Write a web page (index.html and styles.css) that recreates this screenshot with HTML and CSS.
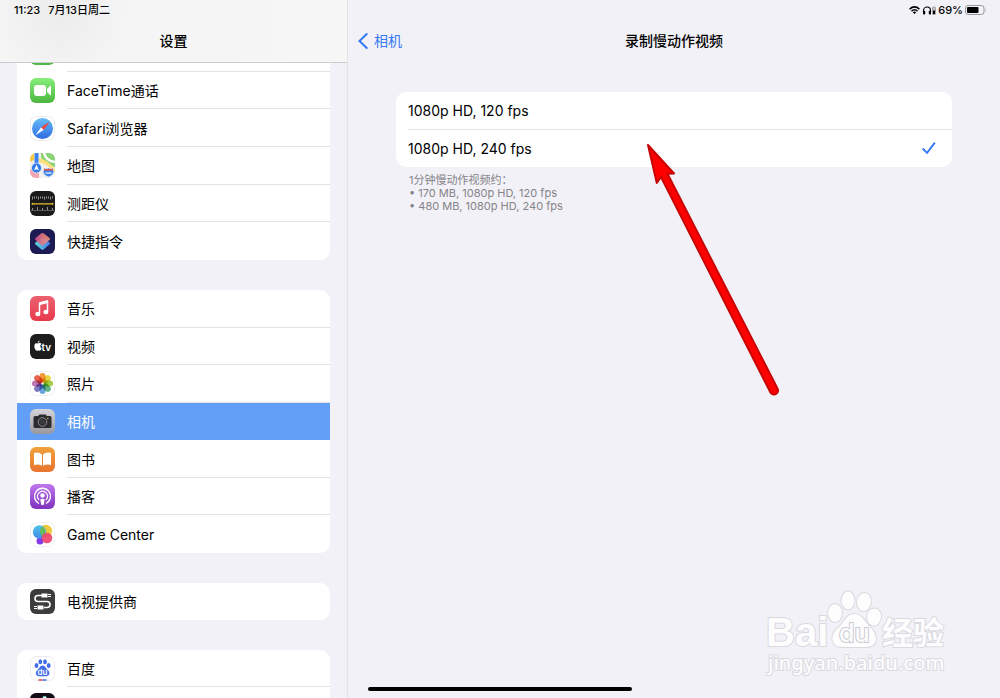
FILE: index.html
```html
<!DOCTYPE html>
<html lang="zh-CN">
<head>
    <meta charset="UTF-8">
    <meta name="viewport" content="width=device-width, initial-scale=1.0">
    <title>设置</title>
    <link rel="stylesheet" href="styles.css">
</head>
<body>
    <!-- 左侧设置列表 -->
    <aside class="sidebar">
        <header class="sidebar-header">
            <div class="status">
                <span>11:23</span>
                <span>7月13日周二</span>
            </div>
            <h1 class="title">设置</h1>
        </header>

        <nav class="list">
            <div class="group group-top">
                <a class="row" href="#messages" aria-label="信息">
                    <svg class="icon" viewBox="0 0 25 25"><rect width="25" height="25" rx="6" fill="#4fb943"/></svg>
                    <span class="label"></span>
                </a>
                <a class="row" href="#facetime">
                    <svg class="icon" viewBox="0 0 25 25">
                        <defs><linearGradient id="green" x2="0" y2="1"><stop stop-color="#86ee7c"/><stop offset="1" stop-color="#4cb73f"/></linearGradient></defs>
                        <rect width="25" height="25" rx="6" fill="url(#green)"/>
                        <rect x="4" y="7" width="12" height="11" rx="3" fill="#fff"/>
                        <path d="M17 11l3-3q1-.6 1 .6v8q0 1.200-1 .5l-3-3z" fill="#fff"/>
                    </svg>
                    <span class="label">FaceTime通话</span>
                </a>
                <a class="row" href="#safari">
                    <svg class="icon" viewBox="0 0 25 25">
                        <defs><linearGradient id="blue" x2="0" y2="1"><stop stop-color="#65bdf8"/><stop offset="1" stop-color="#2e6be2"/></linearGradient></defs>
                        <rect x=".5" y=".5" width="24" height="24" rx="6" fill="#fff" stroke="#ececf0"/>
                        <circle cx="12.500" cy="12.500" r="10.500" fill="url(#blue)"/>
                        <path d="M19.800 5.700l-6.200 8.200-2.400-2.600z" fill="#f0453c"/>
                        <path d="M5.300 19.200l5.900-7.900 2.400 2.600z" fill="#fff"/>
                    </svg>
                    <span class="label">Safari浏览器</span>
                </a>
                <a class="row" href="#maps">
                    <svg class="icon" viewBox="0 0 25 25">
                        <defs><clipPath id="tile"><rect width="25" height="25" rx="6"/></clipPath></defs>
                        <g clip-path="url(#tile)">
                            <rect width="25" height="25" fill="#f3f1ec"/>
                            <path d="M11 0h14v14Q17 12 11 5z" fill="#8bd374"/>
                            <path d="M14 0q2 8 11 9" fill="none" stroke="#fff" stroke-width="2.500"/>
                            <path d="M0 0h4v7L0 9z" fill="#f7c944"/>
                            <path d="M0 16l9 4v5H0z" fill="#f4a5b4"/>
                            <path d="M9 5q9 2 16 11v4Q17 11 9 9z" fill="#fbdf7b"/>
                            <path d="M6.500 0v13" stroke="#3b82ef" stroke-width="4"/>
                            <circle cx="6.500" cy="15" r="5" fill="#2f7bea" stroke="#fff" stroke-width=".6"/>
                            <path d="M6.500 11.500l2.500 6-2.500-1.200L4 17.500z" fill="#fff"/>
                            <path d="M14 15q2.500 1 4.500 0 2 1 4.500 0l1 4q-1 4-5.500 5-4.500-1-5.500-5z" fill="#3b82e8" stroke="#fff" stroke-width=".6"/>
                            <path d="M14 15.500q2.500 1 4.500 0 2 1 4.500 0v2h-9z" fill="#e55349"/>
                            <path d="M15.500 20h6" stroke="#cde2ff" stroke-width="1.500"/>
                        </g>
                    </svg>
                    <span class="label">地图</span>
                </a>
                <a class="row" href="#measure">
                    <svg class="icon" viewBox="0 0 25 25">
                        <rect width="25" height="25" rx="6" fill="#1b1b1c"/>
                        <path d="M2.500 5.500v3M4.500 5.500v2M6.500 5.500v2M8.500 5.500v3M10.500 5.500v2M12.500 5.500v2M14.500 5.500v3M16.500 5.500v2M18.500 5.500v2M20.500 5.500v3M22.500 5.500v2M2.500 19v-2M7.500 19v-3M12.500 19v-2M17.500 19v-3M22.500 19v-2" stroke="#b5b5b5" stroke-width=".8"/>
                        <path d="M1 19.500h23" stroke="#777" stroke-width=".7"/>
                        <path d="M2 12.800h21" stroke="#e5bd2c" stroke-width="1.200"/>
                        <circle cx="2.500" cy="12.800" r="1" fill="#e5bd2c"/><circle cx="22.500" cy="12.800" r="1" fill="#e5bd2c"/>
                    </svg>
                    <span class="label">测距仪</span>
                </a>
                <a class="row" href="#shortcuts">
                    <svg class="icon" viewBox="0 0 25 25">
                        <defs>
                            <linearGradient id="pink"><stop stop-color="#d74f91"/><stop offset="1" stop-color="#ef9d76"/></linearGradient>
                            <linearGradient id="cyan"><stop stop-color="#5ed8d0"/><stop offset="1" stop-color="#4a77ee"/></linearGradient>
                        </defs>
                        <rect width="25" height="25" rx="6" fill="#1c1b54"/>
                        <path d="M12.500 8.500l7 5q1 1 0 2l-6 5q-1 .8-2 0l-6-5q-1-1 0-2z" fill="url(#cyan)"/>
                        <path d="M11.500 4.300q1-.8 2 0l6 4.700q1 1 0 2l-6 5q-1 .8-2 0l-6-5q-1-1 0-2z" fill="url(#pink)" opacity=".9"/>
                    </svg>
                    <span class="label">快捷指令</span>
                </a>
            </div>

            <div class="group group-media">
                <a class="row" href="#music">
                    <svg class="icon" viewBox="0 0 25 25">
                        <defs><linearGradient id="red" x2="0" y2="1"><stop stop-color="#ed6070"/><stop offset="1" stop-color="#e63b4c"/></linearGradient></defs>
                        <rect width="25" height="25" rx="6" fill="url(#red)"/>
                        <path d="M9.500 17.500V7.800l8-2v9.700" fill="none" stroke="#fff" stroke-width="1.500"/>
                        <path d="M9 6.200l9-2.200v3L9 9.200z" fill="#fff"/>
                        <ellipse cx="7.800" cy="18" rx="2.500" ry="2.200" fill="#fff"/><ellipse cx="15.900" cy="16" rx="2.500" ry="2.200" fill="#fff"/>
                    </svg>
                    <span class="label">音乐</span>
                </a>
                <a class="row" href="#tv">
                    <svg class="icon" viewBox="0 0 25 25">
                        <rect width="25" height="25" rx="6" fill="#1d1d1e"/>
                        <path d="M7.600 9.600q1.200-.8 2.600-.5.800.2 1.200.8-1.300.8-1.100 2.300.2 1.400 1.400 2-.9 2.500-2.200 2.500-.9-.4-1.800 0-1.300.4-2.500-1.300-1.500-2.500-.7-4.700 1-2 3.100-1.100zM7.700 8.900q-.1-1.900 1.800-2.500.2 2.100-1.800 2.500z" fill="#fff"/>
                        <text x="11.500" y="16.500" class="tv-text">tv</text>
                    </svg>
                    <span class="label">视频</span>
                </a>
                <a class="row" href="#photos">
                    <svg class="icon petals" viewBox="0 0 25 25">
                        <rect x=".5" y=".5" width="24" height="24" rx="6" fill="#fff" stroke="#f0f0f2"/>
                        <rect class="petal" x="9.500" y="2" width="6" height="9.500" rx="3" fill="#f29a38"/>
                        <rect class="petal" x="9.500" y="2" width="6" height="9.500" rx="3" fill="#ead43d" transform="rotate(45 12.500 12.500)"/>
                        <rect class="petal" x="9.500" y="2" width="6" height="9.500" rx="3" fill="#a4cc45" transform="rotate(90 12.500 12.500)"/>
                        <rect class="petal" x="9.500" y="2" width="6" height="9.500" rx="3" fill="#62b588" transform="rotate(135 12.500 12.500)"/>
                        <rect class="petal" x="9.500" y="2" width="6" height="9.500" rx="3" fill="#67a5dc" transform="rotate(180 12.500 12.500)"/>
                        <rect class="petal" x="9.500" y="2" width="6" height="9.500" rx="3" fill="#8178c2" transform="rotate(225 12.500 12.500)"/>
                        <rect class="petal" x="9.500" y="2" width="6" height="9.500" rx="3" fill="#be75b0" transform="rotate(270 12.500 12.500)"/>
                        <rect class="petal" x="9.500" y="2" width="6" height="9.500" rx="3" fill="#e8634f" transform="rotate(315 12.500 12.500)"/>
                    </svg>
                    <span class="label">照片</span>
                </a>
                <a class="row selected" href="#camera" aria-current="page">
                    <svg class="icon" viewBox="0 0 25 25">
                        <defs><linearGradient id="gray" x2="0" y2="1"><stop stop-color="#d6d6da"/><stop offset="1" stop-color="#98989d"/></linearGradient></defs>
                        <rect width="25" height="25" rx="6" fill="url(#gray)"/>
                        <path d="M5 7h3l1.500-1.500h6L17 7h3q1.500 0 1.500 1.500v9q0 1.500-1.500 1.500H5q-1.500 0-1.500-1.500v-9Q3.500 7 5 7z" fill="#2c2c2e"/>
                        <circle cx="12.500" cy="13" r="4.300" fill="none" stroke="#8f8f92" stroke-width="1"/>
                        <circle cx="12.500" cy="13" r="2.800" fill="#3b3b3d"/>
                        <circle cx="17.800" cy="9.500" r=".8" fill="#e8b52c"/>
                    </svg>
                    <span class="label">相机</span>
                </a>
                <a class="row" href="#books">
                    <svg class="icon" viewBox="0 0 25 25">
                        <defs><linearGradient id="orange" x2="0" y2="1"><stop stop-color="#f1a13c"/><stop offset="1" stop-color="#e8742f"/></linearGradient></defs>
                        <rect width="25" height="25" rx="6" fill="url(#orange)"/>
                        <path d="M12 7.500q-3.500-3-8-1.500v12q4.500-1.500 8 .8zM13 7.500q3.500-3 8-1.500v12q-4.500-1.500-8 .8z" fill="#fff"/>
                    </svg>
                    <span class="label">图书</span>
                </a>
                <a class="row" href="#podcasts">
                    <svg class="icon" viewBox="0 0 25 25">
                        <defs><linearGradient id="purple" x2="0" y2="1"><stop stop-color="#c077ee"/><stop offset="1" stop-color="#7e32bd"/></linearGradient></defs>
                        <rect width="25" height="25" rx="6" fill="url(#purple)"/>
                        <g fill="none" stroke="#fff" stroke-width="1.300" stroke-linecap="round">
                            <path d="M8.500 19.200a8 8 0 1 1 8 0"/>
                            <path d="M8.700 15.500a5 5 0 1 1 7.600 0"/>
                        </g>
                        <circle cx="12.500" cy="11.500" r="2.200" fill="#fff"/>
                        <path d="M10.300 15.500q2.200-1.500 4.400 0l-.8 5q-1.400 1.200-2.800 0z" fill="#fff"/>
                    </svg>
                    <span class="label">播客</span>
                </a>
                <a class="row" href="#gamecenter">
                    <svg class="icon" viewBox="0 0 25 25">
                        <defs><linearGradient id="sky" x2="0" y2="1"><stop stop-color="#4fc3e9"/><stop offset="1" stop-color="#438be9"/></linearGradient></defs>
                        <rect x=".5" y=".5" width="24" height="24" rx="6" fill="#fff" stroke="#f0f0f2"/>
                        <circle cx="10" cy="19" r="3.500" fill="#833be8"/>
                        <circle cx="15.800" cy="9" r="6.300" fill="#f1c83d"/>
                        <circle cx="9.500" cy="10" r="6.700" fill="url(#sky)"/>
                        <path d="M12.700 4.200a6.300 6.300 0 0 0 .5 10.500 6.700 6.700 0 0 0-.5-10.500z" fill="#64bd59"/>
                        <circle cx="17" cy="16" r="5.300" fill="#ef4770" opacity=".93"/>
                    </svg>
                    <span class="label">Game Center</span>
                </a>
            </div>

            <div class="group">
                <a class="row" href="#tvprovider">
                    <svg class="icon" viewBox="0 0 25 25">
                        <rect width="25" height="25" rx="6" fill="#3c3c3d"/>
                        <path d="M12 6.500H8q-3 0-3 3t3 3h9q3 0 3 3t-3 3h-3" fill="none" stroke="#fff" stroke-width="1.600"/>
                        <path d="M11.500 4.500h6v4h-6zM7.500 16.500h6v4h-6z" fill="#fff"/>
                        <path d="M18 5.500h3M18 7.500h3M4 17.500h3M4 19.500h3" stroke="#fff" stroke-width="1"/>
                    </svg>
                    <span class="label">电视提供商</span>
                </a>
            </div>

            <div class="group">
                <a class="row" href="#baidu">
                    <svg class="icon" viewBox="0 0 25 25">
                        <rect x=".5" y=".5" width="24" height="24" rx="6" fill="#fff" stroke="#ececf0"/>
                        <g fill="#416cea">
                            <ellipse cx="6.500" cy="9.500" rx="1.900" ry="2.500"/><ellipse cx="10.300" cy="5.700" rx="1.900" ry="2.500"/>
                            <ellipse cx="15" cy="5.700" rx="1.900" ry="2.500"/><ellipse cx="18.700" cy="9.500" rx="1.900" ry="2.500"/>
                            <path d="M12.600 9.500c2.500 0 3.500 3 5.200 4.500 3 2.800 1.500 6.200-1.500 6.200H9c-3 0-4.500-3.400-1.500-6.200 1.600-1.500 2.600-4.500 5.100-4.500z"/>
                        </g>
                        <text x="12.500" y="18.700" class="du-text">du</text>
                        <path d="M8.500 24h4" stroke="#e5473d" stroke-width="1.500"/><path d="M12.500 24h4" stroke="#416cea" stroke-width="1.500"/>
                    </svg>
                    <span class="label">百度</span>
                </a>
                <a class="row" href="#douyin" aria-label="抖音">
                    <svg class="icon" viewBox="0 0 25 25">
                        <rect width="25" height="25" rx="6" fill="#140d18"/>
                        <path d="M13 3.500h3q.5 4 4 4.500v3q-2.500 0-4-1.300V16a5 5 0 1 1-4-4.900v3a2 2 0 1 0 1 1.900z" fill="#fff" stroke="#45d5d5" stroke-width=".6"/>
                    </svg>
                    <span class="label"></span>
                </a>
            </div>
        </nav>
    </aside>

    <!-- 右侧详情 -->
    <main class="detail">
        <div class="status status-right">
            <svg class="wifi" viewBox="0 0 11 8">
                <g fill="none" stroke="#000" stroke-width="1.500"><path d="M.6 3.100Q5.500-1.300 10.400 3.100"/><path d="M2.500 5.100q3-2.600 6 0"/></g>
                <path d="M3.800 6.200q1.700-1.200 3.400 0L5.500 8z"/>
            </svg>
            <svg class="headphones" viewBox="0 0 14 9">
                <path d="M1.500 6V4.500a3.500 3.500 0 0 1 7 0V6" fill="none" stroke="#000" stroke-width="1.100"/>
                <rect x="1" y="4.800" width="2.200" height="3.700" rx=".8"/><rect x="6.800" y="4.800" width="2.200" height="3.700" rx=".8"/>
                <rect x="10.500" y="1" width="3" height="7.500" rx=".8" fill="#ccc" stroke="#777" stroke-width=".6"/>
                <rect x="11" y="4.500" width="2" height="3.500"/>
            </svg>
            <span>69%</span>
            <svg class="battery" viewBox="0 0 22 10">
                <rect x=".5" y=".5" width="18.500" height="9" rx="2.500" fill="none" stroke="#98989c"/>
                <rect x="2" y="2" width="11.500" height="6" rx="1"/>
                <path d="M20.300 3.500q1.600 1.500 0 3z" fill="#98989c"/>
            </svg>
        </div>
        <header class="navbar">
            <a class="back" href="#camera">
                <svg class="chevron" viewBox="0 0 10 16"><path d="M8.700 1L1.500 8l7.200 7" fill="none" stroke="#3478f6" stroke-width="2" stroke-linecap="round"/></svg>
                相机
            </a>
            <h2 class="title">录制慢动作视频</h2>
        </header>

        <div class="options">
            <label class="option">
                <span>1080p HD, 120 fps</span>
                <input type="radio" name="fps" value="120">
            </label>
            <label class="option">
                <span>1080p HD, 240 fps</span>
                <input type="radio" name="fps" value="240" checked>
            </label>
        </div>

        <div class="note">
            <p>1分钟慢动作视频约：</p>
            <ul>
                <li>• 170 MB, 1080p HD, 120 fps</li>
                <li>• 480 MB, 1080p HD, 240 fps</li>
            </ul>
        </div>

        <!-- 指向 240 fps 的箭头 -->
        <svg class="arrow" viewBox="0 0 140 260">
            <path d="M5 5L31 33.500 24.500 33.700 134.500 248.500A4 4 0 0 1 127.500 252.500L18 37 13.800 43z" fill="#fe0000" stroke="#c80404" stroke-width="2" stroke-linejoin="round"/>
        </svg>

        <!-- 水印 -->
        <svg class="watermark" viewBox="0 0 184 92">
            <g fill="#fdfdfe" stroke="#d9d9df" stroke-width="2" paint-order="stroke">
                <text x="1" y="58" class="wm-logo">Bai</text>
                <ellipse cx="70" cy="25" rx="7" ry="9"/>
                <ellipse cx="83" cy="12.500" rx="6.500" ry="9"/>
                <ellipse cx="99" cy="14" rx="7" ry="9" transform="rotate(8 99 14)"/>
                <ellipse cx="109" cy="29" rx="7" ry="8.500" transform="rotate(8 109 29)"/>
                <path d="M89 26c8 0 11 8 16 13 9 9 8 20-4 20H78c-12 0-14-11-5-19 6-5 8-14 16-14z"/>
                <text x="74" y="54" class="wm-du">du</text>
                <text x="117" y="56" class="wm-name">经验</text>
                <text x="3" y="82" class="wm-url">jingyan.baidu.com</text>
            </g>
        </svg>
    </main>

    <div class="home-bar"></div>
</body>
</html>
```
FILE: styles.css
```css
* {
    box-sizing: border-box;
}

body {
    margin: 0;
    height: 100vh;
    overflow: hidden;
    position: relative;
    display: grid;
    grid-template-columns: 348px 1fr;
    background: #f2f1f7;
    color: #000;
    font-family: Inter, "Noto Sans CJK SC", sans-serif;
    font-size: 14px;
    line-height: 20px;
}

h1, h2, p, ul {
    margin: 0;
    padding: 0;
}

a {
    color: inherit;
    text-decoration: none;
}

svg {
    display: block;
    flex: none;
}

.title {
    font-size: 14px;
    font-weight: 500;
    text-align: center;
}

.status {
    display: flex;
    align-items: center;
    gap: 8px;
    height: 20px;
    padding: 0 14px;
    font-size: 11px;
    font-weight: 500;
}

/* 左侧栏 */
.sidebar {
    position: relative;
    min-height: 0;
    overflow: hidden;
    border-right: 1px solid #e3e2e8;
}

.sidebar-header {
    position: absolute;
    top: 0;
    left: 0;
    right: 0;
    z-index: 1;
    height: 63px;
    border-bottom: 1px solid #cbcbd0;
    background: radial-gradient(circle at 60px 12px, #ececec, #f5f5f5 70px, #f6f6f6);
}

.sidebar-header .title {
    padding: 11px 0;
}

.list {
    display: flex;
    flex-direction: column;
    gap: 30px;
    padding: 34px 17px 0;
}

.group {
    display: flex;
    flex-direction: column;
    flex: none;
    overflow: hidden;
    border-radius: 10px;
    background: #fff;
}

.group-top {
    min-height: 226px;
}

.group-media {
    min-height: 263px;
}

.row {
    display: flex;
    flex: 1 0 37px;
    align-items: center;
    gap: 12px;
    padding-left: 13px;
}

.icon {
    width: 25px;
    height: 25px;
}

.label {
    display: flex;
    flex: 1;
    align-items: center;
    align-self: stretch;
    padding-top: 1px;
    box-shadow: inset 0 -1px #e2e2e5;
}

.row:last-child .label,
.row.selected .label {
    box-shadow: none;
}

.row.selected {
    background: #649ff7;
    color: #fff;
}

.petals {
    isolation: isolate;
}

.petal {
    mix-blend-mode: multiply;
}

.tv-text {
    font-size: 10px;
    font-weight: 600;
    fill: #fff;
}

.du-text {
    font-size: 8px;
    font-weight: 600;
    text-anchor: middle;
    fill: #fff;
}

/* 详情页 */
.detail {
    position: relative;
    min-width: 0;
}

.status-right {
    justify-content: flex-end;
    gap: 2px;
    padding-right: 13px;
}

.wifi {
    width: 11px;
    height: 8px;
}

.headphones {
    width: 14px;
    height: 9px;
}

.battery {
    width: 22px;
    height: 10px;
}

.navbar {
    display: grid;
    grid-template-columns: 1fr auto 1fr;
    align-items: center;
    height: 42px;
    padding: 0 10px;
}

.back {
    display: flex;
    align-items: center;
    gap: 6px;
    color: #3478f6;
}

.chevron {
    width: 10px;
    height: 16px;
}

.options {
    margin: 30px 48px 0;
    border-radius: 10px;
    background: #fff;
}

.option {
    display: flex;
    align-items: center;
    justify-content: space-between;
    height: 37px;
    margin-left: 12px;
    padding-right: 16px;
}

.option + .option {
    height: 38px;
    border-top: 1px solid #e2e2e5;
}

.option input {
    appearance: none;
    width: 14px;
    height: 14px;
    margin: 0;
}

.option input:checked {
    background: #3478f6;
    clip-path: polygon(0 56%, 10% 45%, 35% 71%, 86% 4%, 97% 12%, 37% 91%);
}

.note {
    margin: 7px 61px;
    color: #858489;
    font-size: 11px;
    line-height: 13px;
}

.note ul {
    list-style: none;
}

.arrow {
    position: absolute;
    top: 140px;
    left: 295px;
    width: 140px;
    height: 260px;
}

.watermark {
    position: absolute;
    right: 51px;
    bottom: 18px;
    width: 184px;
    height: 92px;
}

.wm-logo {
    font-family: "Liberation Sans", sans-serif;
    font-size: 40px;
    font-weight: 700;
}

.wm-du {
    font-size: 25px;
    font-weight: 500;
    stroke: #c9c9d0;
}

.wm-name {
    font-size: 31px;
    font-weight: 700;
}

.wm-url {
    font-family: "Noto Sans", sans-serif;
    font-size: 20px;
    font-weight: 500;
}

/* 底部横条 */
.home-bar {
    position: absolute;
    bottom: 7px;
    left: 50%;
    width: 264px;
    height: 4px;
    margin-left: -132px;
    border-radius: 2px;
    background: #000;
}
```
